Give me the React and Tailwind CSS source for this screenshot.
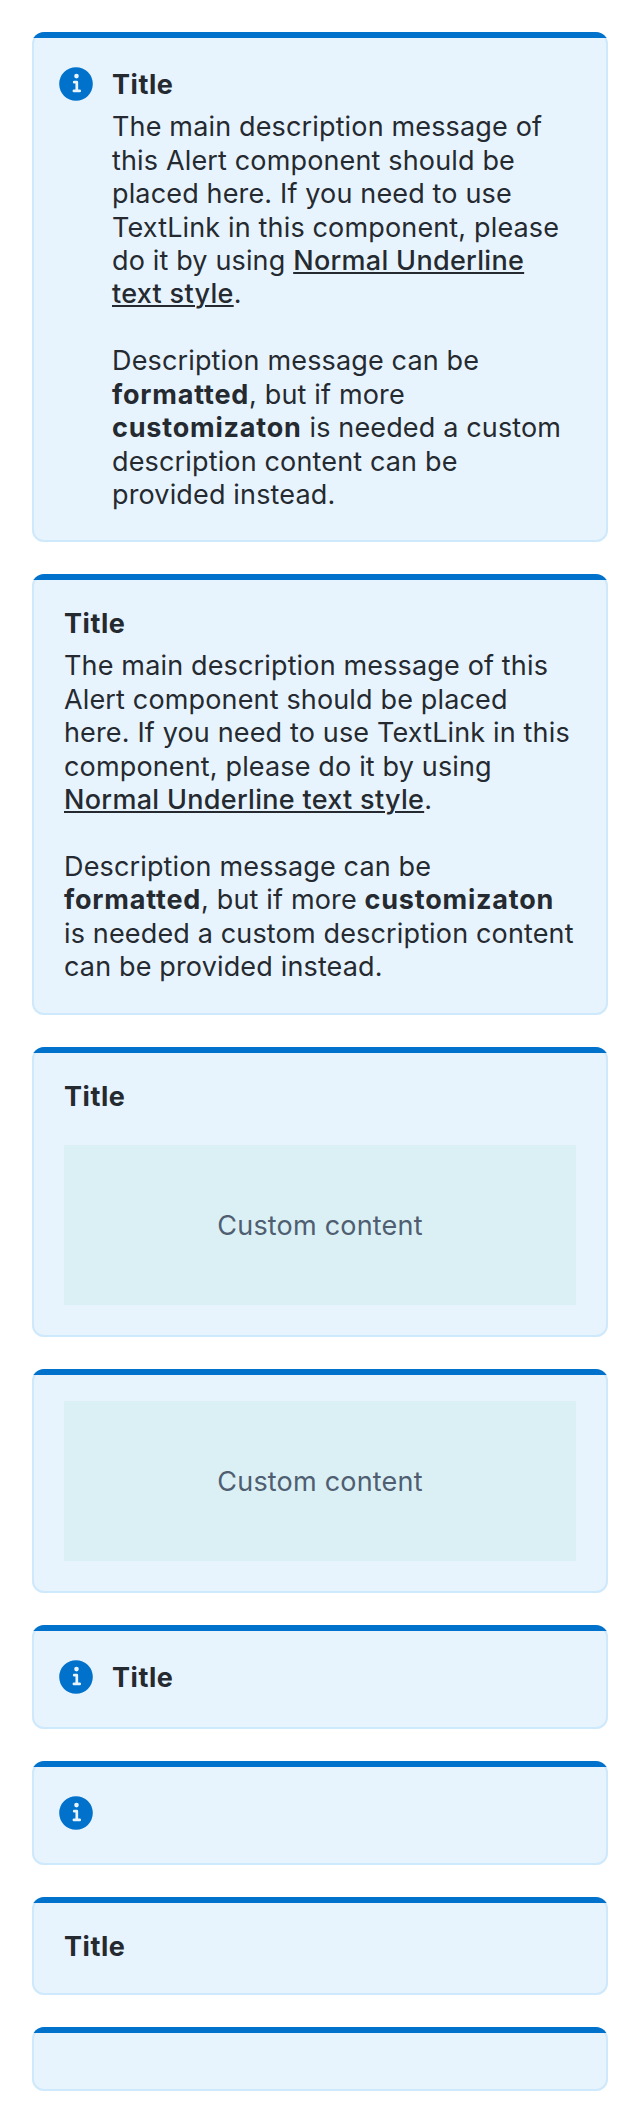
const Icon = () => (
  <svg className="block h-10 w-10 shrink-0" viewBox="0 0 40 40">
    <circle cx="20" cy="20" r="16.8" fill="#0172cb" />
    <circle cx="20.5" cy="12.1" r="2.3" fill="#e8f4fd" />
    <path d="M18.2 18.2H20.8V26.9M17.9 26.9H23.7" fill="none" stroke="#e8f4fd" strokeWidth="2.7" strokeLinecap="round" strokeLinejoin="round" />
  </svg>
);

const Alert = ({ className, children }) => (
  <section className={`relative flex shrink-0 overflow-hidden rounded-xl bg-[#e8f4fd] inset-ring-2 inset-ring-[#cfe9fc] ${className}`}>
    <div className="absolute inset-x-0 top-0 h-1.5 bg-[#0172cb]" />
    {children}
  </section>
);

const Title = () => <h2 className="text-[27px] leading-8 font-bold tracking-[0.55px]">Title</h2>;
const Custom = () => (
  <div className="flex h-40 w-full items-center justify-center bg-[#dbf0f5] pt-0.5 text-[27px] tracking-[0.2px] text-[#4f5e71]">Custom content</div>
);
const Link = ({ children }) => (
  <span className="font-medium tracking-[0.3px] underline decoration-2 underline-offset-2">{children}</span>
);
const Strong = ({ children }) => <strong className="font-bold tracking-[0.8px]">{children}</strong>;
const Description = ({ children }) => (
  <div className="mt-[9.3px] text-[27px] leading-[33.43px] tracking-[0.15px]">{children}</div>
);

export default function App() {
  return (
    <main className="flex h-[2123px] w-[640px] flex-col gap-8 bg-white p-8 font-['Inter',sans-serif] text-[#252a31]">
      <Alert className="h-[510px] pt-8 pl-6">
        <Icon />
        <div className="mt-[5px] ml-4 whitespace-nowrap">
          <Title />
          <Description>
            The main description message of<br />this Alert component should be<br />placed here. If you need to use<br />TextLink in this component, please<br />do it by using <Link>Normal Underline<br />text style</Link>.<br /><br />Description message can be<br /><Strong>formatted</Strong>, but if more<br /><Strong>customizaton</Strong> is needed a custom<br />description content can be<br />provided instead.
          </Description>
        </div>
      </Alert>
      <Alert className="h-[441px] pt-[34px] pl-8">
        <div className="whitespace-nowrap">
          <Title />
          <Description>
            The main description message of this<br />Alert component should be placed<br />here. If you need to use TextLink in this<br />component, please do it by using<br /><Link>Normal Underline text style</Link>.<br /><br />Description message can be<br /><Strong>formatted</Strong>, but if more <Strong>customizaton</Strong><br />is needed a custom description content<br />can be provided instead.
          </Description>
        </div>
      </Alert>
      <Alert className="h-[290px] flex-col gap-8 px-8 pt-[34px]"><Title /><Custom /></Alert>
      <Alert className="h-[224px] px-8 pt-8"><Custom /></Alert>
      <Alert className="h-[104px] pt-8 pl-6"><Icon /><div className="mt-[5px] ml-4"><Title /></div></Alert>
      <Alert className="h-[104px] pt-8 pl-6"><Icon /></Alert>
      <Alert className="h-[98px] pt-[34px] pl-8"><Title /></Alert>
      <Alert className="h-[64px]" />
    </main>
  );
}
